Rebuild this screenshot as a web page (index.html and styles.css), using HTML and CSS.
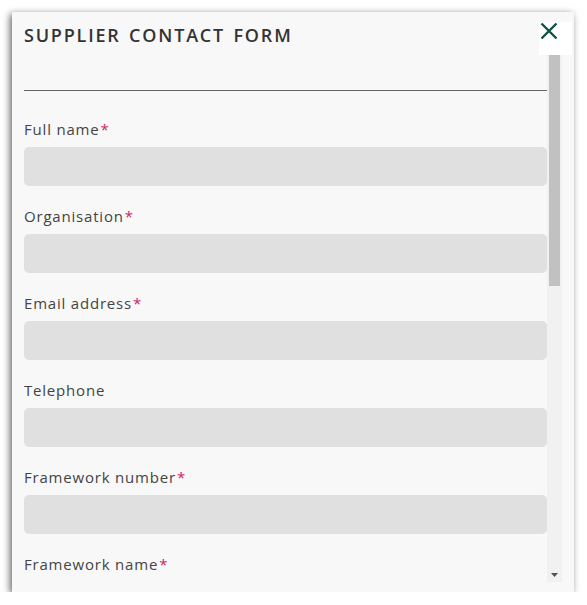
FILE: index.html
```html
<!DOCTYPE html>
<html lang="en">
<head>
  <meta charset="UTF-8">
  <title>Supplier Contact Form</title>
  <meta name="viewport" content="width=device-width, initial-scale=1.0">
  <link rel="stylesheet" href="styles.css">
</head>
<body>

<div class="modal">
  <button class="close-btn" type="button" aria-label="Close">
    <svg width="18" height="18" viewBox="0 0 18 18">
      <path d="M1.5 1.5 L16.5 16.5 M16.5 1.5 L1.5 16.5" stroke="#0d5247" stroke-width="2.4" fill="none"/>
    </svg>
  </button>
  <div class="modal-body">
    <h2>Supplier contact form</h2>
    <hr>
    <form id="supplierForm">
      <label>Full name<span class="req">*</span></label>
      <input type="text" name="name">
      <label>Organisation<span class="req">*</span></label>
      <input type="text" name="organisation">
      <label>Email address<span class="req">*</span></label>
      <input type="email" name="email">
      <label>Telephone</label>
      <input type="tel" name="telephone">
      <label>Framework number<span class="req">*</span></label>
      <input type="text" name="framework_number">
      <label>Framework name<span class="req">*</span></label>
      <input type="text" name="framework_name">
    </form>
  </div>
  <div class="scrollbar">
    <div class="scroll-btn"></div>
    <div class="scroll-track">
      <div class="scroll-thumb"></div>
    </div>
    <div class="scroll-btn">
      <svg width="7" height="4" viewBox="0 0 7 4"><path d="M0 0 L7 0 L3.5 4 Z" fill="#505050"/></svg>
    </div>
  </div>
</div>

</body>
</html>
```

FILE: styles.css
```css
body {
  margin: 0;
  background: #fff;
  font-family: 'Open Sans', sans-serif;
  color: #444;
}
.modal {
  position: relative;
  display: flex;
  margin: 12px 0 0 12px;
  width: 562px;
  height: 580px;
  background: #f8f8f8;
  box-shadow: -2px 2px 7px rgba(0, 0, 0, 0.6);
  box-sizing: border-box;
  padding: 10px 12px;
}
.modal-body {
  flex: 1;
  height: 560px;
  overflow: hidden;
}
.scrollbar {
  width: 15px;
  height: 560px;
  display: flex;
  flex-direction: column;
  background: #f1f1f1;
}
.scroll-btn {
  height: 15px;
  display: flex;
  align-items: center;
  justify-content: center;
}
.scroll-btn svg {
  display: block;
}
.scroll-track {
  flex: 1;
  padding: 0 2px;
}
.scroll-thumb {
  height: 249px;
  background: #c1c1c1;
}
.close-btn {
  position: absolute;
  top: 10px;
  right: 2px;
  z-index: 2;
  width: 33px;
  height: 33px;
  padding: 0;
  border: none;
  background: #fff;
  display: flex;
  align-items: flex-start;
  justify-content: flex-start;
  cursor: pointer;
}
.close-btn svg {
  display: block;
  margin-left: 1px;
}
h2 {
  margin: 0;
  padding-top: 2px;
  font-size: 18px;
  font-weight: 600;
  letter-spacing: 1.8px;
  word-spacing: 2px;
  text-transform: uppercase;
  color: #333;
  line-height: 22px;
}
hr {
  margin: 44px 0 0;
  border: none;
  border-top: 1px solid #666;
}
form {
  display: flex;
  flex-direction: column;
  padding-top: 28px;
}
label {
  font-size: 15px;
  font-weight: 500;
  letter-spacing: 0.8px;
  color: #444;
  line-height: 20px;
  margin-bottom: 8px;
}
.req {
  color: #d01f62;
  margin-left: 1px;
}
input {
  border: none;
  border-radius: 5px;
  background: #e0e0e0;
  height: 39px;
  margin-bottom: 20px;
  font-family: inherit;
  font-size: 14px;
  padding: 0 10px;
}
```
